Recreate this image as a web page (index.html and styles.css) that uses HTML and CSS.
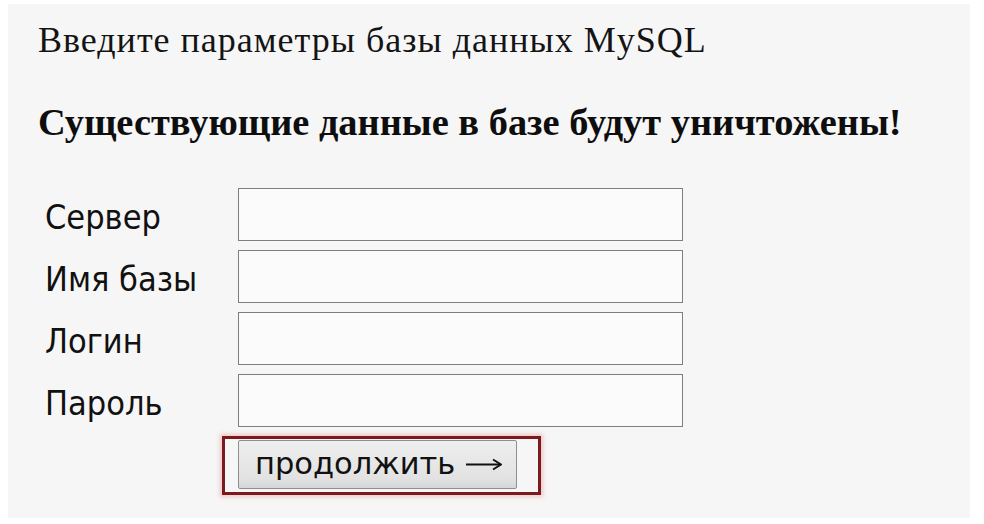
FILE: index.html
```html
<!DOCTYPE html>
<html lang="ru">
<head>
<meta charset="utf-8">
<link rel="stylesheet" href="styles.css">
</head>
<body>
<div class="page">
  <p class="intro">Введите параметры базы данных MySQL</p>
  <p class="warn">Существующие данные в базе будут уничтожены!</p>
  <form class="form">
    <label class="label">Сервер</label><input class="field" type="text">
    <label class="label">Имя базы</label><input class="field" type="text">
    <label class="label">Логин</label><input class="field" type="text">
    <label class="label">Пароль</label><input class="field" type="password">
    <div class="actions"><span class="focus-ring"><button class="btn" type="button">продолжить<svg class="arrow" width="36" height="14" viewBox="0 0 36 14"><path d="M0 7.5H34" stroke="#111" stroke-width="2" fill="none"/><path d="M27 2.5L35 7.5L27 12.5" stroke="#111" stroke-width="2" fill="none" stroke-linejoin="miter"/></svg></button></span></div>
  </form>
</div>
</body>
</html>
```
FILE: styles.css
```css
html, body { margin: 0; padding: 0; background: #ffffff; }
.page {
  margin: 4px 14px 0 8px;
  height: 514px;
  background: #f6f6f6;
  padding: 16px 0 0 30px;
  box-sizing: border-box;
  overflow: hidden;
}
.intro {
  margin: 0;
  font-family: "Liberation Serif", "Times New Roman", serif;
  font-size: 36px;
  letter-spacing: 1px;
  line-height: 40px;
  color: #141414;
}
.warn {
  margin: 40px 0 0 0;
  font-family: "Liberation Serif", "Times New Roman", serif;
  font-weight: bold;
  font-size: 38.4px;
  line-height: 44px;
  color: #0e0e0e;
}
.form {
  display: grid;
  grid-template-columns: 200px 445px;
  row-gap: 9px;
  margin-top: 44px;
}
.label {
  font-family: "DejaVu Sans Condensed", "DejaVu Sans", Verdana, sans-serif;
  font-size: 34px;
  line-height: 47px;
  padding-top: 6px;
  color: #111;
  padding-left: 7px;
}
.field {
  height: 53px;
  box-sizing: border-box;
  border: 1px solid #7e7e7e;
  background: #fbfbfb;
  margin: 0;
}
.actions {
  grid-column: 1 / 3;
  padding-left: 184px;
  display: flex;
}
.focus-ring {
  display: flex;
  border: 3px solid #7a1a1f;
  padding: 1px 21px 3px 13px;
  box-shadow: 0 0 4px 2px rgba(235, 140, 140, 0.45);
}
.btn {
  margin: 0;
  border: 1px solid #8f8f8f;
  border-radius: 2px;
  background: linear-gradient(#eeeeee, #e2e2e2 80%, #d6d6d6);
  width: 279px;
  height: 49px;
  font-family: "DejaVu Sans", Verdana, sans-serif;
  font-size: 30.5px;
  line-height: 45px;
  color: #111;
  text-align: left;
  white-space: nowrap;
  padding: 0 0 2px 16px;
}
.arrow {
  margin-left: 11px;
  vertical-align: 3px;
}
```
